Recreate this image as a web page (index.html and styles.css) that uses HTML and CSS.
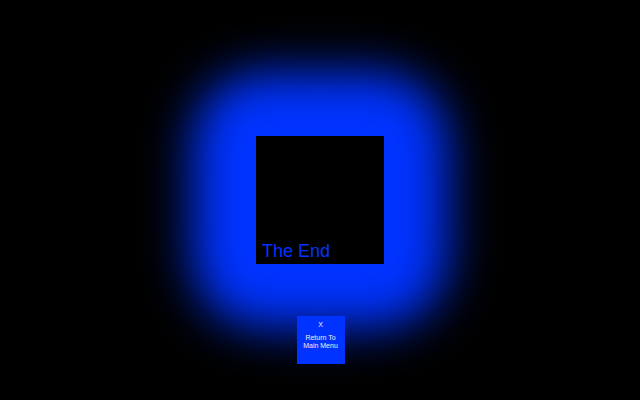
FILE: index.html
```html
<!DOCTYPE html>
<html>
<head>
<meta charset="utf-8">
<link rel="stylesheet" href="styles.css">
</head>
<body>
<main class="stage">
  <section class="end-box">
    <span class="end-title">The End</span>
  </section>
  <button class="menu-btn">
    <span class="menu-x">X</span>
    <span class="menu-label">Return To<br>Main Menu</span>
  </button>
</main>
</body>
</html>
```
FILE: styles.css
```css
html {
  background: #000;
}
html, body {
  margin: 0;
  padding: 0;
  width: 640px;
  height: 400px;
  overflow: hidden;
  font-family: "Liberation Sans", Arial, sans-serif;
}
.stage {
  display: flex;
  flex-direction: column;
  align-items: center;
  padding-top: 136px;
  gap: 52px;
}
.end-box {
  position: relative;
  width: 128px;
  height: 128px;
  background: #000;
  display: flex;
  align-items: flex-end;
  box-sizing: border-box;
  padding: 0 0 2px 6px;
}
.end-box::before {
  content: "";
  position: absolute;
  inset: -64px;
  border-radius: 72px;
  background: #0033ff;
  filter: blur(24px);
  z-index: -1;
}
.end-title {
  color: #0033ff;
  font-size: 18px;
  line-height: 22px;
}
.menu-btn {
  width: 48px;
  height: 48px;
  margin-left: 1px;
  background: #0033ff;
  border: none;
  padding: 5px 0 0;
  color: #f0f0f0;
  font-family: "Liberation Sans", Arial, sans-serif;
  font-size: 7px;
  line-height: 8px;
  display: flex;
  flex-direction: column;
  align-items: center;
  justify-content: flex-start;
  box-sizing: border-box;
}
.menu-x {
  display: block;
  margin-bottom: 5px;
}
.menu-label {
  display: block;
  text-align: center;
}
```
